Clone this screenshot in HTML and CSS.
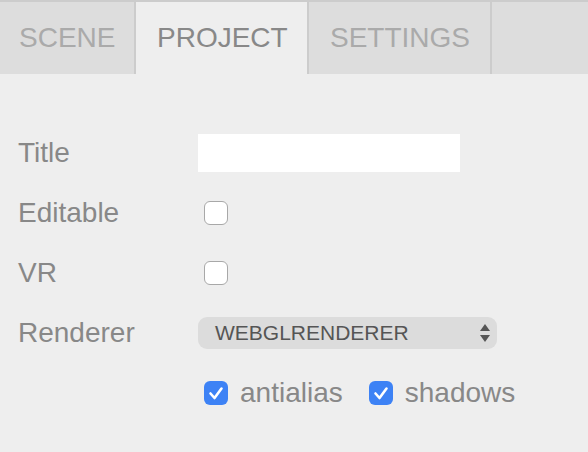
FILE: index.html
```html
<!DOCTYPE html>
<html>
<head>
<meta charset="utf-8">
<link rel="stylesheet" href="styles.css">
</head>
<body>
<div class="sidebar">
  <div class="tabs">
    <div class="tab tab-scene">Scene</div>
    <div class="tab tab-project selected">Project</div>
    <div class="tab tab-settings">Settings</div>
  </div>
  <div class="panel">
    <div class="row">
      <span class="label">Title</span>
      <span class="text-input"></span>
    </div>
    <div class="row">
      <span class="label">Editable</span>
      <span class="check"></span>
    </div>
    <div class="row">
      <span class="label">VR</span>
      <span class="check"></span>
    </div>
    <div class="row">
      <span class="label">Renderer</span>
      <span class="select">
        <span class="select-text">WEBGLRENDERER</span>
        <svg class="arrows" width="10" height="20" viewBox="0 0 10 20">
          <path d="M5 1 L10 8 L0 8 Z" fill="#555"/>
          <path d="M0 12 L10 12 L5 19 Z" fill="#555"/>
        </svg>
      </span>
    </div>
    <div class="row row-options">
      <span class="label"></span>
      <span class="check checked">
        <svg width="24" height="24" viewBox="0 0 24 24"><path d="M6.5 12.5 L10.5 17 L17.5 7.5" fill="none" stroke="#fff" stroke-width="2.6" stroke-linecap="round" stroke-linejoin="round"/></svg>
      </span>
      <span class="opt-text">antialias</span>
      <span class="check checked second">
        <svg width="24" height="24" viewBox="0 0 24 24"><path d="M6.5 12.5 L10.5 17 L17.5 7.5" fill="none" stroke="#fff" stroke-width="2.6" stroke-linecap="round" stroke-linejoin="round"/></svg>
      </span>
      <span class="opt-text">shadows</span>
    </div>
  </div>
</div>
</body>
</html>
```
FILE: styles.css
```css
html, body {
  margin: 0;
  padding: 0;
  background: #eeeeee;
}
body {
  width: 588px;
  height: 452px;
  overflow: hidden;
  font-family: "Liberation Sans", Arial, Helvetica, sans-serif;
}
.sidebar {
  width: 588px;
  height: 452px;
  background: #eeeeee;
}
.tabs {
  display: flex;
  height: 72px;
  background: #dddddd;
  border-top: 2px solid #cccccc;
}
.tab {
  display: flex;
  align-items: center;
  box-sizing: border-box;
  height: 72px;
  padding-left: 19px;
  font-size: 28px;
  text-transform: uppercase;
  color: #aaaaaa;
  border-right: 2px solid #cccccc;
}
.tab-scene { width: 136px; }
.tab-project { width: 173px; padding-left: 21px; }
.tab-settings { width: 183px; padding-left: 21px; }
.tab.selected {
  background: #eeeeee;
  color: #888888;
}
.panel {
  padding-top: 59px;
}
.row {
  display: flex;
  align-items: center;
  height: 40px;
  margin-bottom: 20px;
}
.label {
  box-sizing: border-box;
  width: 198px;
  padding-left: 18px;
  font-size: 28px;
  color: #888888;
  flex: none;
}
.text-input {
  width: 262px;
  height: 38px;
  background: #ffffff;
}
.check {
  box-sizing: border-box;
  width: 24px;
  height: 24px;
  margin-left: 6px;
  border: 1px solid #a8a8a8;
  border-radius: 6px;
  background: #ffffff;
  flex: none;
}
.check.checked {
  border: none;
  background: #3d82f5;
  display: flex;
}
.check.second {
  margin-left: 26px;
}
.select {
  display: flex;
  align-items: center;
  justify-content: space-between;
  box-sizing: border-box;
  width: 299px;
  height: 32px;
  padding: 0 7px 0 17px;
  border-radius: 9px;
  background: #dcdcdc;
}
.select-text {
  font-size: 21px;
  color: #555555;
}
.arrows {
  display: block;
}
.row-options {
  margin-top: 5px;
}
.row-options .label {
  width: 198px;
}
.opt-text {
  margin-left: 12px;
  font-size: 28px;
  color: #888888;
}
```
